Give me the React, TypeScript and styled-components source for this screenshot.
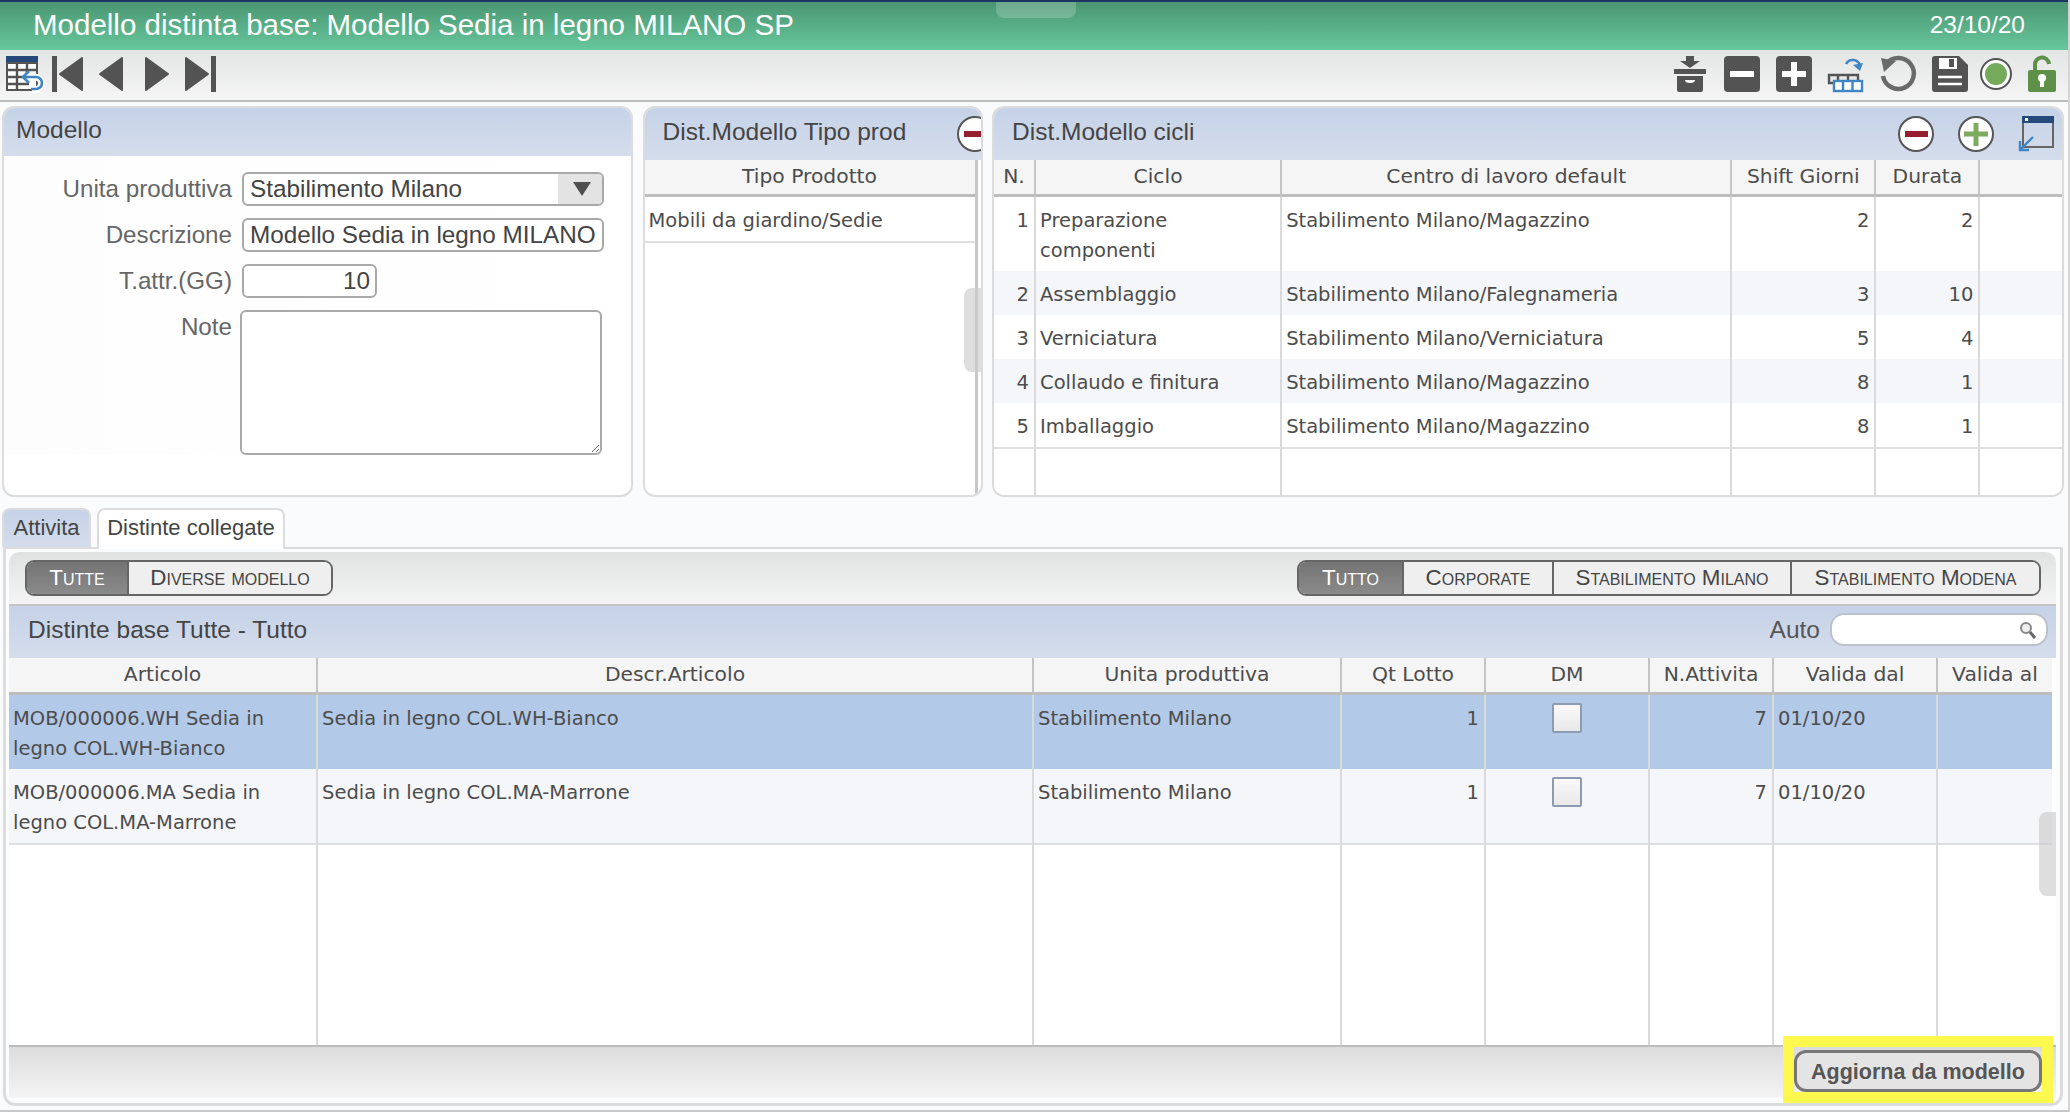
import React from 'react';
import styled, { createGlobalStyle } from 'styled-components';

const GlobalStyle = createGlobalStyle`
  * { box-sizing: border-box; }
  html, body { margin: 0; padding: 0; background: #fafbfd; }
  body { font-family: "Liberation Sans", Arial, sans-serif; color: #4a4a4a; }
`;

const Shell = styled.div`
  position: relative;
  width: 2070px;
  height: 1112px;
  overflow: hidden;
  border-right: 2px solid #d4d4d4;
  border-bottom: 2px solid #c8c8c8;
  background: #fafbfd;
`;

const TitleBar = styled.header`
  height: 50px;
  border-top: 2px solid #1c3461;
  background: linear-gradient(#4a9672, #67c79c);
  color: #fff;
  display: flex;
  align-items: center;
  justify-content: space-between;
  padding: 0 43px 2px 33px;
`;

const Title = styled.h1`
  margin: 0;
  font-size: 29.5px;
  font-weight: 400;
`;

const DateText = styled.span`
  font-size: 24.5px;
`;

const Handle = styled.div`
  position: absolute;
  left: 996px;
  top: 2px;
  width: 80px;
  height: 16px;
  border-radius: 0 0 8px 8px;
  background: rgba(255, 255, 255, 0.2);
`;

const Toolbar = styled.div`
  height: 52px;
  border-bottom: 2px solid #bdbdbd;
  background: linear-gradient(#e3e4e4, #f5f5f5);
  display: flex;
  align-items: flex-start;
  justify-content: space-between;
  padding: 6px 8px 0 6px;
`;

const IconGroup = styled.div<{ $gap: number }>`
  display: flex;
  gap: ${(p) => p.$gap}px;
  svg { display: block; overflow: visible; }
`;

const Main = styled.main`
  padding: 4px 5px 0 2px;
`;

const TopRow = styled.div`
  display: grid;
  grid-template-columns: 631px 340px 1071.5px;
  column-gap: 9.5px;
  height: 391px;
`;

const Panel = styled.section`
  border: 2px solid #dcdcdc;
  border-radius: 12px;
  background: #fff;
  overflow: hidden;
  position: relative;
`;

const PanelHead = styled.div<{ $h?: number; $pad?: number }>`
  height: ${(p) => p.$h ?? 52}px;
  padding: 0 8px 5px ${(p) => p.$pad ?? 18}px;
  background: linear-gradient(#c5d2e7, #d5ddec);
  display: flex;
  align-items: center;
  justify-content: space-between;
  font-size: 24.5px;
  color: #444;
  overflow: hidden;
`;

const HeadIcons = styled.div`
  display: flex;
  gap: 24px;
  margin-top: 5px;
  svg { display: block; }
`;

const ClippedIcon = styled.div`
  margin: 5px -20px 0 0;
  svg { display: block; }
`;

const Form = styled.div`
  display: grid;
  grid-template-columns: 228px 362px;
  column-gap: 10px;
  row-gap: 12px;
  padding-top: 16px;
  background: linear-gradient(90deg, #fdfdfd, #fff);
`;

const Label = styled.label`
  font-size: 24.2px;
  line-height: 34px;
  text-align: right;
  color: #666;
`;

const Field = styled.div<{ $w?: number; $right?: boolean }>`
  width: ${(p) => p.$w ?? 362}px;
  height: 34px;
  border: 2px solid #a9a9a9;
  border-radius: 6px;
  background: #fff;
  font-size: 24.3px;
  line-height: 30px;
  padding: 0 5px 0 6px;
  color: #444;
  white-space: nowrap;
  overflow: hidden;
  text-align: ${(p) => (p.$right ? 'right' : 'left')};
`;

const SelectField = styled(Field)`
  display: flex;
  justify-content: space-between;
  padding-right: 0;
`;

const SelectArrow = styled.span`
  width: 44px;
  padding-left: 4px;
  background: #e3e3e3;
  display: flex;
  align-items: center;
  justify-content: center;
`;

const Note = styled.textarea`
  width: 362px;
  height: 145px;
  margin-left: -2px;
  border: 2px solid #a9a9a9;
  border-radius: 6px;
  background: #fff;
  outline: none;
`;

const Rail = styled.div`
  border-right: 3px solid #c8c8c8;
  margin-right: 3px;
  height: 100%;
`;

const ScrollThumb = styled.div<{ $top: number; $h: number }>`
  position: absolute;
  right: 0;
  top: ${(p) => p.$top}px;
  width: 17px;
  height: ${(p) => p.$h}px;
  border-radius: 8px 0 0 8px;
  background: rgba(200, 200, 200, 0.6);
`;

const Grid = styled.table`
  border-collapse: separate;
  border-spacing: 0;
  table-layout: fixed;
  width: 100%;
  font-family: "DejaVu Sans", Verdana, sans-serif;
  font-size: 19.5px;
  color: #4c4c4c;
`;

const Th = styled.th`
  height: 37px;
  padding: 0 4px 2px;
  background: #f5f5f5;
  border-bottom: 3px solid #bdbdbd;
  border-right: 2px solid #c4c4c4;
  font-size: 20.3px;
  font-weight: 400;
  text-align: center;
  white-space: nowrap;
  overflow: hidden;
  &:last-child { border-right: none; }
`;

const Tr = styled.tr<{ $bg?: string }>`
  background: ${(p) => p.$bg ?? '#fff'};
`;

const Td = styled.td<{ $right?: boolean; $center?: boolean }>`
  padding: 9px ${(p) => (p.$right ? 5 : 4)}px 5px 4px;
  line-height: 30px;
  vertical-align: top;
  border-right: 2px solid #dadada;
  text-align: ${(p) => (p.$right ? 'right' : p.$center ? 'center' : 'left')};
  &:last-child { border-right: none; }
`;

const FillerTd = styled.td<{ $h: number }>`
  height: ${(p) => p.$h}px;
  border-top: 2px solid #dfdfdf;
  border-right: 2px solid #dadada;
  background: #fff;
  &:last-child { border-right: none; }
`;

const Tabs = styled.nav`
  display: flex;
  gap: 6px;
  margin-top: 11px;
  height: 39px;
`;

const Tab = styled.div<{ $active?: boolean; $w: number }>`
  width: ${(p) => p.$w}px;
  height: ${(p) => (p.$active ? 41 : 39)}px;
  border: 2px solid #dcdcdc;
  border-bottom: none;
  border-radius: 8px 8px 0 0;
  background: ${(p) => (p.$active ? '#fff' : 'linear-gradient(#c5d2e7, #d5ddec)')};
  font-size: 22px;
  line-height: 36px;
  text-align: center;
  color: #444;
  position: relative;
  z-index: 1;
`;

const TabBody = styled.div`
  height: 559px;
  margin-left: 1px;
  border: 3px solid #dcdcdc;
  border-top-width: 2px;
  border-radius: 0 0 12px 12px;
  padding: 3px 4px 3px 3px;
  background: #fbfcfd;
`;

const Inner = styled.div`
  position: relative;
  height: 100%;
  display: flex;
  flex-direction: column;
  background: #fff;
`;

const InnerBar = styled.div`
  height: 54px;
  flex: none;
  border-radius: 10px 10px 0 0;
  border-bottom: 2px solid #c4c4c4;
  background: linear-gradient(#e0e2e2, #f4f4f4);
  display: flex;
  justify-content: space-between;
  align-items: flex-start;
  padding: 8px 15px 0 16px;
`;

const Segments = styled.div`
  display: flex;
  height: 36px;
  border: 2px solid #666;
  border-radius: 9px;
  overflow: hidden;
`;

const Segment = styled.div<{ $active?: boolean; $w: number }>`
  width: ${(p) => p.$w}px;
  background: ${(p) => (p.$active ? 'linear-gradient(#747474, #8a8a8a)' : '#efefef')};
  color: ${(p) => (p.$active ? '#fff' : '#444')};
  font-variant: small-caps;
  font-size: 22.4px;
  line-height: 32px;
  text-align: center;
  white-space: nowrap;
  border-right: 2px solid #666;
  &:last-child { border-right: none; }
`;

const SearchWrap = styled.div`
  display: flex;
  align-items: center;
  gap: 10px;
  color: #555;
`;

const SearchBox = styled.div`
  width: 218px;
  height: 33px;
  border: 2px solid #bcc2cc;
  border-radius: 14px;
  background: #fff;
  display: flex;
  align-items: center;
  justify-content: flex-end;
  padding-right: 8px;
`;

const TableArea = styled.div`
  flex: none;
  width: 2043px;
`;

const Footer = styled.div`
  position: relative;
  height: 53px;
  flex: none;
  border-top: 2px solid #bdbdbd;
  background: linear-gradient(#dcdcdc, #f4f4f4);
  display: flex;
  justify-content: flex-end;
  padding: 3px 14px 0 0;
`;

const UpdateButton = styled.button`
  width: 248px;
  height: 42px;
  border: 3px solid #777;
  border-radius: 12px;
  background: #e4e4e4;
  color: #555;
  font-family: "Liberation Sans", Arial, sans-serif;
  font-size: 21.5px;
  font-weight: 700;
  padding: 3px 0 0;
`;

const Highlight = styled.div`
  position: absolute;
  right: 3px;
  top: -11px;
  width: 270px;
  height: 67px;
  border: 11px solid #fdf84e;
  pointer-events: none;
`;

const Check = styled.span`
  display: inline-block;
  width: 30px;
  height: 30px;
  margin-top: -1px;
  vertical-align: top;
  border: 2px solid #8d9bb0;
  border-radius: 2px;
  background: linear-gradient(#fafafa, #e8e8e8);
`;

const DARK = '#535353';
const BLUE = '#3f85c5';

const TableIcon = () => (
  <svg width="36" height="36" viewBox="0 0 36 36">
    <rect x="0" y="0" width="32" height="7" fill="#24497a" />
    <rect x="1" y="7" width="30" height="27" fill="#fff" stroke={DARK} strokeWidth="2" />
    <path d="M1 14h30M1 21h30M1 28h22M11 7v27M21 7v12" stroke={DARK} strokeWidth="2.4" fill="none" />
    <path d="M26 34h3a6 6 0 0 0 0-13H17" stroke="#fff" strokeWidth="7" fill="none" />
    <path d="M25 33h5a6 6 0 0 0 0-12H17M23 15l-6 6 6 6" stroke={BLUE} strokeWidth="2.6" fill="none" />
  </svg>
);

const FirstIcon = () => (
  <svg width="36" height="36" viewBox="0 0 36 36">
    <rect x="0" y="0" width="5" height="36" fill={DARK} />
    <path d="M30 2v32L8 18z" fill={DARK} stroke={DARK} strokeWidth="2" strokeLinejoin="round" />
  </svg>
);

const PrevIcon = () => (
  <svg width="36" height="36" viewBox="0 0 36 36">
    <path d="M24 2v32L2 18z" fill={DARK} stroke={DARK} strokeWidth="2" strokeLinejoin="round" />
  </svg>
);

const NextIcon = () => (
  <svg width="30" height="36" viewBox="0 0 30 36">
    <path d="M2 2v32l22-16z" fill={DARK} stroke={DARK} strokeWidth="2" strokeLinejoin="round" />
  </svg>
);

const LastIcon = () => (
  <svg width="32" height="36" viewBox="0 0 32 36">
    <path d="M2 2v32l22-16z" fill={DARK} stroke={DARK} strokeWidth="2" strokeLinejoin="round" />
    <rect x="27" y="0" width="5" height="36" fill={DARK} />
  </svg>
);

const ArchiveIcon = () => (
  <svg width="36" height="36" viewBox="0 0 36 36">
    <path d="M14 0h8v5h6l-10 7-10-7h6z" fill={DARK} />
    <rect x="2" y="13" width="32" height="5" fill={DARK} />
    <path d="M5 20h26v14a2 2 0 0 1-2 2H7a2 2 0 0 1-2-2z" fill={DARK} />
    <path d="M13 24h10a5 3 0 0 1-10 0z" fill="#fff" />
  </svg>
);

const MinusSquare = () => (
  <svg width="36" height="36" viewBox="0 0 36 36">
    <rect width="36" height="36" rx="4" fill={DARK} />
    <rect x="6" y="15" width="24" height="6" fill="#fff" />
  </svg>
);

const PlusSquare = () => (
  <svg width="36" height="36" viewBox="0 0 36 36">
    <rect width="36" height="36" rx="4" fill={DARK} />
    <path d="M15 6h6v9h9v6h-9v9h-6v-9H6v-6h9z" fill="#fff" />
  </svg>
);

const GridRefreshIcon = () => (
  <svg width="36" height="36" viewBox="0 0 36 36">
    <path d="M18 8a7.500 7.500 0 0 1 14 2" stroke={BLUE} strokeWidth="2.6" fill="none" />
    <path d="M25 9l7 6 3-8z" fill={BLUE} />
    <path d="M1 19h29v8H1zM1 27h4" fill="#e8e8e8" stroke={DARK} strokeWidth="2.4" />
    <path d="M10 19v6M20 19v6" stroke={DARK} strokeWidth="2.4" />
    <rect x="6" y="25" width="28" height="10" fill="#fff" stroke={BLUE} strokeWidth="2.4" />
    <path d="M15 25v10M24.500 25v10" stroke={BLUE} strokeWidth="2.4" />
  </svg>
);

const ReloadIcon = () => (
  <svg width="36" height="36" viewBox="0 0 36 36">
    <path d="M6 8A15.500 15.500 0 1 1 3 20" stroke="#6a6a6a" strokeWidth="4.500" fill="none" />
    <path d="M1 2l15 3-12 11z" fill="#6a6a6a" />
  </svg>
);

const SaveIcon = () => (
  <svg width="36" height="36" viewBox="0 0 36 36">
    <path d="M3 0h24l9 9v24a3 3 0 0 1-3 3H3a3 3 0 0 1-3-3V3a3 3 0 0 1 3-3z" fill={DARK} />
    <rect x="7" y="2" width="18" height="11" fill="#fff" />
    <rect x="17" y="3" width="5" height="8" fill={DARK} />
    <path d="M6 21h24M6 28h24" stroke="#fff" strokeWidth="2.400" />
  </svg>
);

const StatusIcon = () => (
  <svg width="36" height="36" viewBox="0 0 36 36">
    <circle cx="18" cy="18" r="15" fill="#fff" stroke={DARK} strokeWidth="2" />
    <circle cx="18" cy="18" r="11" fill="#74aa5a" />
  </svg>
);

const LockIcon = () => (
  <svg width="36" height="36" viewBox="0 0 36 36">
    <path d="M11 16V9a7 7 0 0 1 14-1" stroke="#5f9048" strokeWidth="4" fill="none" />
    <rect x="4" y="14" width="28" height="22" rx="2" fill="#5f9048" />
    <circle cx="18" cy="22" r="4" fill="#fff" />
    <rect x="16" y="23" width="4" height="8" fill="#fff" />
  </svg>
);

const RedMinus = () => (
  <svg width="36" height="36" viewBox="0 0 36 36">
    <circle cx="18" cy="18" r="17" fill="#fff" stroke="#555" strokeWidth="2" />
    <rect x="7" y="15" width="23" height="6" fill="#951f2e" />
  </svg>
);

const GreenPlus = () => (
  <svg width="36" height="36" viewBox="0 0 36 36">
    <circle cx="18" cy="18" r="17" fill="#fff" stroke="#555" strokeWidth="2" />
    <path d="M15.500 7h5v8.500H30v5h-9.500V30h-5v-9.500H6v-5h9.500z" fill="#7cab5f" />
  </svg>
);

const WindowIcon = () => (
  <svg width="36" height="36" viewBox="0 0 36 36">
    <rect x="5" y="1" width="30" height="30" fill="none" stroke="#666" strokeWidth="2" />
    <rect x="4" y="0" width="32" height="7" fill="#24497a" />
    <rect x="7" y="2" width="3" height="3" fill="#fff" />
    <path d="M15 21L2 34M2 25v9h9" stroke={BLUE} strokeWidth="2.400" fill="none" />
  </svg>
);

const SearchIcon = () => (
  <svg width="20" height="20" viewBox="0 0 20 20">
    <circle cx="8" cy="8" r="5" fill="#eee" stroke="#888" strokeWidth="2" />
    <path d="M12 12l5 6" stroke="#666" strokeWidth="3" />
  </svg>
);

type Cell = { text?: string; right?: boolean; check?: boolean };

const cicliCols = [42, 246, 450, 144, 104, 81];
const cicliHead = ['N.', 'Ciclo', 'Centro di lavoro default', 'Shift Giorni', 'Durata', ''];
const cicliRows = [
  ['1', 'Preparazione componenti', 'Stabilimento Milano/Magazzino', '2', '2'],
  ['2', 'Assemblaggio', 'Stabilimento Milano/Falegnameria', '3', '10'],
  ['3', 'Verniciatura', 'Stabilimento Milano/Verniciatura', '5', '4'],
  ['4', 'Collaudo e finitura', 'Stabilimento Milano/Magazzino', '8', '1'],
  ['5', 'Imballaggio', 'Stabilimento Milano/Magazzino', '8', '1'],
];

const distintaCols = [309, 716, 308, 144, 164, 124, 164, 114];
const distintaHead = ['Articolo', 'Descr.Articolo', 'Unita produttiva', 'Qt Lotto', 'DM', 'N.Attivita', 'Valida dal', 'Valida al'];
const distintaRows: Cell[][] = [
  [
    { text: 'MOB/000006.WH Sedia in legno COL.WH-Bianco' },
    { text: 'Sedia in legno COL.WH-Bianco' },
    { text: 'Stabilimento Milano' },
    { text: '1', right: true },
    { check: true },
    { text: '7', right: true },
    { text: '01/10/20' },
    {},
  ],
  [
    { text: 'MOB/000006.MA Sedia in legno COL.MA-Marrone' },
    { text: 'Sedia in legno COL.MA-Marrone' },
    { text: 'Stabilimento Milano' },
    { text: '1', right: true },
    { check: true },
    { text: '7', right: true },
    { text: '01/10/20' },
    {},
  ],
];

const Columns = ({ widths }: { widths: number[] }) => (
  <colgroup>
    {widths.map((w, i) => (
      <col key={i} width={w} />
    ))}
  </colgroup>
);

const App = () => {
  return (
    <Shell>
      <GlobalStyle />
      <TitleBar>
        <Title>Modello distinta base: Modello Sedia in legno MILANO SP</Title>
        <DateText>23/10/20</DateText>
      </TitleBar>
      <Handle />
      <Toolbar>
        <IconGroup $gap={10}>
          <TableIcon />
          <FirstIcon />
          <PrevIcon />
          <NextIcon />
          <LastIcon />
        </IconGroup>
        <IconGroup $gap={10}>
          <IconGroup $gap={16}>
            <ArchiveIcon />
            <MinusSquare />
            <PlusSquare />
            <GridRefreshIcon />
            <ReloadIcon />
            <SaveIcon />
          </IconGroup>
          <StatusIcon />
          <LockIcon />
        </IconGroup>
      </Toolbar>

      <Main>
        <TopRow>
          <Panel>
            <PanelHead $pad={12} $h={48}>Modello</PanelHead>
            <Form>
              <Label>Unita produttiva</Label>
              <SelectField>
                Stabilimento Milano
                <SelectArrow>
                  <svg width="18" height="14" viewBox="0 0 18 14">
                    <path d="M0 0h18L9 14z" fill="#4f4f4f" />
                  </svg>
                </SelectArrow>
              </SelectField>
              <Label>Descrizione</Label>
              <Field>Modello Sedia in legno MILANO</Field>
              <Label>T.attr.(GG)</Label>
              <Field $w={135} $right>10</Field>
              <Label>Note</Label>
              <Note />
            </Form>
          </Panel>

          <Panel>
            <PanelHead>
              Dist.Modello Tipo prod
              <ClippedIcon>
                <RedMinus />
              </ClippedIcon>
            </PanelHead>
            <Rail>
              <Grid>
                <thead>
                  <tr>
                    <Th>Tipo Prodotto</Th>
                  </tr>
                </thead>
                <tbody>
                  <Tr>
                    <Td>Mobili da giardino/Sedie</Td>
                  </Tr>
                  <tr>
                    <FillerTd $h={250} />
                  </tr>
                </tbody>
              </Grid>
            </Rail>
            <ScrollThumb $top={180} $h={84} />
          </Panel>

          <Panel>
            <PanelHead>
              Dist.Modello cicli
              <HeadIcons>
                <RedMinus />
                <GreenPlus />
                <WindowIcon />
              </HeadIcons>
            </PanelHead>
            <Grid>
              <Columns widths={cicliCols} />
              <thead>
                <tr>
                  {cicliHead.map((h, i) => (
                    <Th key={i}>{h}</Th>
                  ))}
                </tr>
              </thead>
              <tbody>
                {cicliRows.map((row, i) => (
                  <Tr key={row[0]} $bg={i % 2 === 1 ? '#f4f6fa' : '#fff'}>
                    <Td $right>{row[0]}</Td>
                    <Td>{row[1]}</Td>
                    <Td>{row[2]}</Td>
                    <Td $right>{row[3]}</Td>
                    <Td $right>{row[4]}</Td>
                    <Td />
                  </Tr>
                ))}
                <tr>
                  {cicliCols.map((_, i) => (
                    <FillerTd key={i} $h={50} />
                  ))}
                </tr>
              </tbody>
            </Grid>
          </Panel>
        </TopRow>

        <Tabs>
          <Tab $w={89}>Attivita</Tab>
          <Tab $w={188} $active>Distinte collegate</Tab>
        </Tabs>
        <TabBody>
          <Inner>
            <InnerBar>
              <Segments>
                <Segment $w={102} $active>Tutte</Segment>
                <Segment $w={202}>Diverse modello</Segment>
              </Segments>
              <Segments>
                <Segment $w={105} $active>Tutto</Segment>
                <Segment $w={150}>Corporate</Segment>
                <Segment $w={238}>Stabilimento Milano</Segment>
                <Segment $w={247}>Stabilimento Modena</Segment>
              </Segments>
            </InnerBar>
            <PanelHead $pad={19}>
              Distinte base Tutte - Tutto
              <SearchWrap>
                Auto
                <SearchBox>
                  <SearchIcon />
                </SearchBox>
              </SearchWrap>
            </PanelHead>
            <TableArea>
              <Grid>
                <Columns widths={distintaCols} />
                <thead>
                  <tr>
                    {distintaHead.map((h) => (
                      <Th key={h}>{h}</Th>
                    ))}
                  </tr>
                </thead>
                <tbody>
                  {distintaRows.map((row, r) => (
                    <Tr key={r} $bg={r === 0 ? '#b2c9e8' : '#f4f6fa'}>
                      {row.map((c, i) => (
                        <Td key={i} $right={c.right} $center={c.check}>
                          {c.check ? <Check /> : c.text}
                        </Td>
                      ))}
                    </Tr>
                  ))}
                  <tr>
                    {distintaCols.map((_, i) => (
                      <FillerTd key={i} $h={202} />
                    ))}
                  </tr>
                </tbody>
              </Grid>
            </TableArea>
            <Footer>
              <UpdateButton>Aggiorna da modello</UpdateButton>
              <Highlight />
            </Footer>
            <ScrollThumb $top={260} $h={84} />
          </Inner>
        </TabBody>
      </Main>
    </Shell>
  );
};

export default App;
